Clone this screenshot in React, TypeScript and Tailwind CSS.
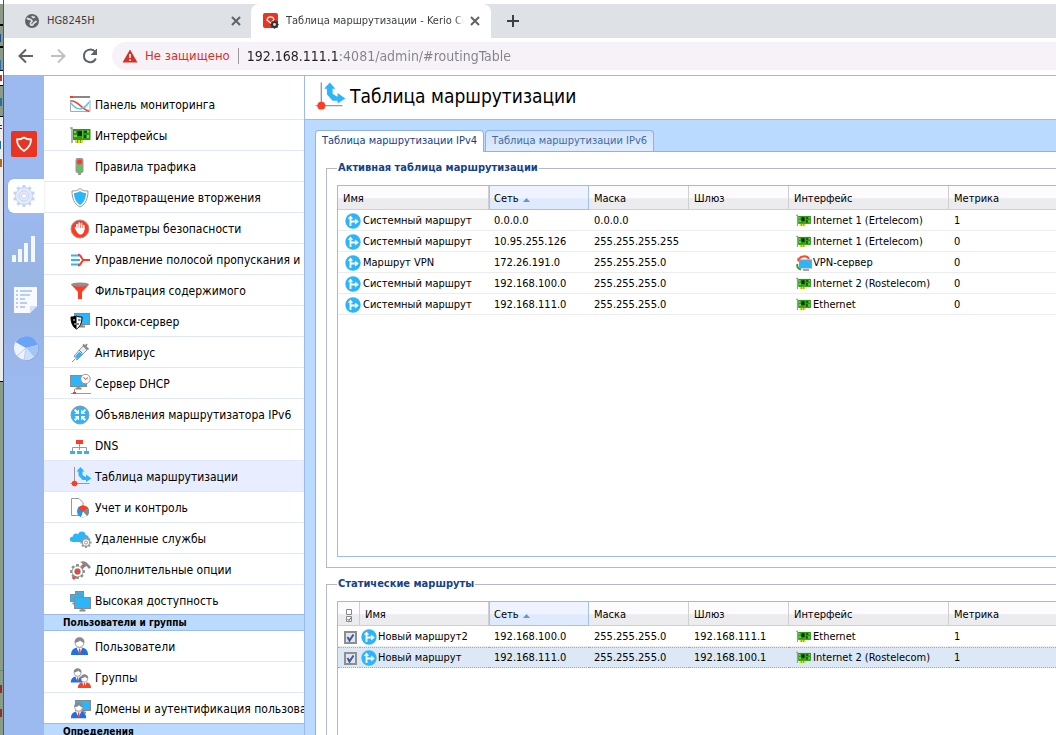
import type { ReactNode } from "react";

function Svg({ children, className = "size-[22px]", box = "0 0 22 22" }: { children: ReactNode; className?: string; box?: string }) {
  return (
    <svg viewBox={box} className={`${className} shrink-0`} fill="none" aria-hidden="true">
      {children}
    </svg>
  );
}

function GearShape({ color, hole }: { color: string; hole: string }) {
  return (
    <g>
      {[0, 45, 90, 135].map((a) => (
        <rect key={a} x="-2" y="-10" width="4" height="20" rx="1" fill={color} transform={`rotate(${a})`} />
      ))}
      <circle r="7.5" fill={color} />
      <circle r="3.5" fill={hole} />
    </g>
  );
}

function Monitor({ x = 0, y = 0, w = 16, h = 11 }) {
  return (
    <g>
      <rect x={x + 0.5} y={y + 0.5} width={w - 1} height={h - 1} fill="#2bb5fa" stroke="#8a8a8a" />
      <path d={`M${x + w / 2 - 3} ${y + h + 1.5}h6M${x + w / 2} ${y + h}v1.5`} stroke="#8a8a8a" strokeWidth="2" />
    </g>
  );
}

function NetCard({ className = "size-[22px]" }: { className?: string }) {
  return (
    <Svg className={className}>
      <path d="M0 3h2v15" stroke="#999" strokeWidth="1.5" />
      <rect x="3" y="4" width="17.5" height="11" fill="#2a9a12" />
      <path d="M4 6h2v2H4zM4 10h3v2H4zM17 5.5h2v2h-2zM17 10h2v3h-2z" fill="#7bd84a" />
      <rect x="7.5" y="6" width="5" height="5" fill="#0b2a06" />
      <path d="M14 6h3v2h-3zM14 10h2v3h-2z" fill="#124d08" />
      <path d="M12.5 5v9" stroke="#5cc030" />
      <path d="M5 15h8v3H5z" fill="#d9dc3a" />
      <path d="M7.5 15v3M10.5 15v3" stroke="#7a9a20" />
    </Svg>
  );
}

function RoutingIcon({ className = "size-[22px]" }: { className?: string }) {
  return (
    <Svg className={className}>
      <path d="M4.5 1v17M0.500 17.500h19" stroke="#999" />
      <path d="M6.500 5.500L10.500 1L14.500 5.500H12.500V9L15.500 11H16V8.500L21.500 12.500L16 16V14H12.500L8.500 9.500V5.500Z" fill="#2bb5fa" />
      <circle cx="4.500" cy="17.500" r="2.800" fill="#ff3b22" />
    </Svg>
  );
}

function RouteBadge() {
  return (
    <Svg className="size-4" box="0 0 16 16">
      <circle cx="8" cy="8" r="7.700" fill="#2bb5fa" />
      <path d="M5.500 13V5M5.500 8.500H11" stroke="#fff" strokeWidth="1.800" />
      <path d="M2.800 5.700L5.500 2.500L8.200 5.700ZM10.200 5.500L13.800 8.500L10.200 11.500Z" fill="#fff" />
    </Svg>
  );
}

function VpnIcon() {
  return (
    <Svg className="size-4" box="0 0 16 16">
      <path d="M2.500 6C3 0.500 11 0 13 4" stroke="#ff4a2a" strokeWidth="2" />
      <path d="M1 3l1 4 3-2z" fill="#ff4a2a" />
      <path d="M1.500 9C0.500 12 2.500 14 5 14.500" stroke="#2f9e4a" strokeWidth="2" />
      <rect x="3.500" y="5" width="12" height="8" fill="#2bb5fa" stroke="#999" />
      <path d="M7 15h6" stroke="#888" strokeWidth="1.500" />
    </Svg>
  );
}

function Person({ x = 0, y = 0, s = 1, shirt = "#1f6fe8" }) {
  return (
    <g transform={`translate(${x} ${y}) scale(${s})`}>
      <path d="M1 18C1 13 4 11 7 10.500H12C15 11 18 13 18 18Z" fill={shirt} />
      <path d="M6.500 10.500L9.500 17L12.500 10.500Z" fill="#fff" />
      <path d="M9 11.500h1.200l0.600 5-1.200 1.500-1.200-1.500z" fill="#f0452c" />
      <circle cx="9.500" cy="6" r="4.300" fill="#fff" stroke="#999" />
      <path d="M4.500 5.500C4.500 -1.500 14.500 -1.500 14.500 5.500C12 5.500 11 4.500 10 3.500C9 5 7 5.500 4.500 5.500Z" fill="#8a8a8a" />
    </g>
  );
}

const menu: { title: string; icon: ReactNode; active?: boolean }[] = [
  {
    title: "Панель мониторинга",
    icon: (
      <Svg>
        <path d="M0 3h20" stroke="#888" strokeWidth="2" />
        <path d="M0 3h3" stroke="#ff3b22" strokeWidth="2" />
        <path d="M0.500 6v11.500H20V6" stroke="#aaa" />
        <path d="M1 7C8 6 12 16 19 17" stroke="#f0452c" strokeWidth="1.500" />
        <path d="M1 9C6 16 13 18 19 8" stroke="#5cc5f8" strokeWidth="1.500" />
      </Svg>
    ),
  },
  { title: "Интерфейсы", icon: <NetCard /> },
  {
    title: "Правила трафика",
    icon: (
      <Svg>
        <rect x="5.500" y="2" width="8" height="15" rx="2" fill="#999" />
        <path d="M8 17h3v2H8z" fill="#999" />
        <circle cx="9.500" cy="6" r="2.500" fill="#ff3b22" />
        <circle cx="9.500" cy="12.500" r="2.500" fill="#35e030" />
      </Svg>
    ),
  },
  {
    title: "Предотвращение вторжения",
    icon: (
      <Svg>
        <path d="M10 1.500C12 3.500 15 4 18 4C18 11 16 17 10 20C4 17 2 11 2 4C5 4 8 3.500 10 1.500Z" fill="#fff" stroke="#999" />
        <path d="M10 4C12 5.500 14 6 16 6C16 11 14 15.500 10 18C6 15.500 4 11 4 6C6 6 8 5.500 10 4Z" fill="#2bb5fa" />
      </Svg>
    ),
  },
  {
    title: "Параметры безопасности",
    icon: (
      <Svg>
        <circle cx="10" cy="11" r="9" fill="#ff3b22" stroke="#999" />
        <path d="M7 11V6.500M9.200 10V5M11.500 10V5.500M13.700 11V7.500M5.500 10L8 14" stroke="#fff" strokeWidth="1.700" strokeLinecap="round" />
        <path d="M6.500 10H14.500C14.500 14 13 16.500 10.500 16.500C8 16.500 6.500 14 6.500 10Z" fill="#fff" />
      </Svg>
    ),
  },
  {
    title: "Управление полосой пропускания и",
    icon: (
      <Svg>
        <path d="M1 6.500h9M1 11h9M1 15.500h9" stroke="#2bb5fa" strokeWidth="2" />
        <path d="M8 5.500C12 5.500 11 11 14 11H20M8 16.500C12 16.500 11 11 14 11" stroke="#ff3b22" strokeWidth="2" />
      </Svg>
    ),
  },
  {
    title: "Фильтрация содержимого",
    icon: (
      <Svg>
        <path d="M1 4.500H19L12 12V19H8V12Z" fill="#ff3b22" />
        <ellipse cx="10" cy="4.500" rx="9" ry="2" fill="#8f8f8f" />
      </Svg>
    ),
  },
  {
    title: "Прокси-сервер",
    icon: (
      <Svg>
        <Monitor x={4} y={2} w={16} h={12} />
        <path d="M1 6C3 6 5 6 6.500 5C8 6 10 6 12 6C12 12 10 16 6.500 18C3 16 1 12 1 6Z" fill="#fff" stroke="#000" />
        <path d="M6.500 5V18C3 16 1 12 1 6Z" fill="#000" />
        <path d="M3 9h2M6.500 13H4" stroke="#fff" />
        <path d="M8 9h2.500M6.500 13H9" stroke="#000" />
      </Svg>
    ),
  },
  {
    title: "Антивирус",
    icon: (
      <Svg>
        <path d="M2 20L5 17" stroke="#999" />
        <path d="M4 14L13 4L17 8L7 18Z" fill="#e8eef2" stroke="#999" />
        <path d="M5 14.500L9 10L13 12L7.500 17Z" fill="#2bb5fa" />
        <path d="M9 8l3 3" stroke="#f0452c" />
        <path d="M13 2.500l5.500 5M15 5l2-3" stroke="#888" strokeWidth="1.800" />
      </Svg>
    ),
  },
  {
    title: "Сервер DHCP",
    icon: (
      <Svg>
        <Monitor x={0} y={2} w={17} h={12} />
        <path d="M1 20.500h20M4.500 16v4" stroke="#999" />
        <rect x="3" y="19" width="3" height="2" fill="#ff3b22" />
        <circle cx="15.500" cy="6" r="4.700" fill="#fff" stroke="#999" />
        <path d="M13.500 4L15.500 6.500L18 4.500" stroke="#f0452c" />
      </Svg>
    ),
  },
  {
    title: "Объявления маршрутизатора IPv6",
    icon: (
      <Svg>
        <circle cx="10" cy="11" r="9" fill="#2bb5fa" stroke="#8a9aa5" />
        {[0, 90, 180, 270].map((a) => (
          <path key={a} transform={`rotate(${a} 10 11)`} fill="#fff" d="M9 10V5.500L7.500 7L5.500 5L4 6.500L6 8.500L4.500 10Z" />
        ))}
      </Svg>
    ),
  },
  {
    title: "DNS",
    icon: (
      <Svg>
        <path d="M9.500 8v7M2.500 16v-3.500h14V16" stroke="#999" />
        <rect x="6" y="5" width="7" height="4" fill="#ff3b22" />
        <path d="M0 16h5v3H0zM7 16h5v3H7zM14 16h5v3h-5z" fill="#2bb5fa" />
      </Svg>
    ),
  },
  { title: "Таблица маршрутизации", icon: <RoutingIcon />, active: true },
  {
    title: "Учет и контроль",
    icon: (
      <Svg>
        <path d="M9 18.500H1.500V1.500H9L13 5.500V9" fill="#fff" stroke="#999" />
        <circle cx="13" cy="14.500" r="6" fill="#2196e8" />
        <path d="M13 14.500L8 11C10 7.500 16 7.500 18 11Z" fill="#ff3b22" />
        <path d="M13 14.500L18 11C20 14 19 17 17 19Z" fill="#888" />
        <path d="M13 14.500L17 19C14 21 12 20.500 11 20Z" fill="#fff" />
      </Svg>
    ),
  },
  {
    title: "Удаленные службы",
    icon: (
      <Svg>
        <path d="M3 14C-1.500 14 -1 8.500 3 8.500C3 5 7 5 8 6.500C9 2 16 3 15.500 7C20 7 20 14 16 14Z" fill="#2bb5fa" />
        <g transform="translate(16 14.500) scale(0.56)">
          <GearShape color="#999" hole="#fff" />
          <circle r="5.500" fill="#fff" />
          <circle r="2.800" stroke="#888" strokeWidth="1.500" />
        </g>
      </Svg>
    ),
  },
  {
    title: "Дополнительные опции",
    icon: (
      <Svg>
        <path d="M3 20L14 6" stroke="#f0452c" strokeWidth="3" />
        <g transform="translate(7.500 12.500) scale(0.75)">
          <GearShape color="#8f8f8f" hole="#f0452c" />
          <circle r="5.500" stroke="#fff" strokeWidth="2.500" />
        </g>
        <path d="M10 3C13 1.500 16 2 18 5L21 8L19 10L16.500 7L14 8.500C14 5.500 12 4 10 3Z" fill="#888" />
      </Svg>
    ),
  },
  {
    title: "Высокая доступность",
    icon: (
      <Svg>
        <Monitor x={5} y={1} w={9} h={7} />
        <Monitor x={-0.500} y={4} w={12} h={8} />
        <Monitor x={4} y={7} w={17} h={12} />
      </Svg>
    ),
  },
];

const users: { title: string; icon: ReactNode }[] = [
  { title: "Пользователи", icon: <Svg><Person y={1} /></Svg> },
  {
    title: "Группы",
    icon: (
      <Svg>
        <Person y={1} s={0.8} />
        <Person x={7} y={7} s={0.78} shirt="#f0452c" />
      </Svg>
    ),
  },
  {
    title: "Домены и аутентификация пользователей",
    icon: (
      <Svg>
        <Monitor x={5} y={2} w={16} h={11} />
        <Person y={4} s={0.9} />
      </Svg>
    ),
  },
];

interface Route {
  name: string;
  net: string;
  mask: string;
  gateway?: string;
  iface: string;
  metric: number;
}

const activeRoutes: Route[] = [
  { name: "Системный маршрут", net: "0.0.0.0", mask: "0.0.0.0", iface: "Internet 1 (Ertelecom)", metric: 1 },
  { name: "Системный маршрут", net: "10.95.255.126", mask: "255.255.255.255", iface: "Internet 1 (Ertelecom)", metric: 0 },
  { name: "Маршрут VPN", net: "172.26.191.0", mask: "255.255.255.0", iface: "VPN-сервер", metric: 0 },
  { name: "Системный маршрут", net: "192.168.100.0", mask: "255.255.255.0", iface: "Internet 2 (Rostelecom)", metric: 0 },
  { name: "Системный маршрут", net: "192.168.111.0", mask: "255.255.255.0", iface: "Ethernet", metric: 0 },
];

const staticRoutes: Route[] = [
  { name: "Новый маршрут2", net: "192.168.100.0", mask: "255.255.255.0", gateway: "192.168.111.1", iface: "Ethernet", metric: 1 },
  { name: "Новый маршрут", net: "192.168.111.0", mask: "255.255.255.0", gateway: "192.168.100.1", iface: "Internet 2 (Rostelecom)", metric: 1 },
];

function RouteTable({ routes, checkable = false, selected = -1 }: { routes: Route[]; checkable?: boolean; selected?: number }) {
  const th = "h-6 border-r border-b border-[#d0d0d0] bg-linear-to-b from-[#fdfbfd] from-50% to-[#ececef] to-55% p-0 pt-1 pl-[5px] text-left font-normal last:border-r-0";
  return (
    <table className="w-full table-fixed border-separate border-spacing-0 whitespace-nowrap">
      <colgroup>
        {checkable && <col className="w-[22px]" />}
        <col className={checkable ? "w-[129px]" : "w-[151px]"} />
        <col className="w-[100px]" />
        <col className="w-[100px]" />
        <col className="w-[100px]" />
        <col className="w-[160px]" />
        <col />
      </colgroup>
      <thead>
        <tr>
          {checkable && (
            <th className={th}>
              <Svg className="h-3.5 w-3" box="0 0 12 14">
                <path d="M3.500 0.500h5v5h-5zM3.500 7.500h5v5h-5z" fill="#fff" stroke="#888" />
                <path d="M4.500 10L6 11.500L8 8.500" stroke="#3a5a9a" />
              </Svg>
            </th>
          )}
          <th className={checkable ? `${th} pl-[3px]` : th}>Имя</th>
          <th className="h-6 border border-t-0 border-[#a3c2f3] bg-linear-to-b from-[#eff3ff] from-50% to-[#dfebfc] to-55% p-0 pt-1 pl-1 text-left font-normal">
            <span className="flex items-center gap-1">
              Сеть
              <Svg className="h-1 w-[7px]" box="0 0 7 4">
                <path d="M0 4L3.500 0L7 4Z" fill="#6d94cf" />
              </Svg>
            </span>
          </th>
          <th className={th}>Маска</th>
          <th className={th}>Шлюз</th>
          <th className={th}>Интерфейс</th>
          <th className={th}>Метрика</th>
        </tr>
      </thead>
      <tbody>
        {routes.map((r, i) => {
          const td =
            i === selected
              ? "h-[21px] border-y border-dotted border-[#8fb0de] bg-[#dce8f6] p-0 pt-px pl-[5px]"
              : "h-[21px] border-b border-[#ededed] p-0 pt-0.5 pl-[5px]";
          return (
            <tr key={i}>
              {checkable && (
                <td className={td}>
                  <label className="flex items-center pl-px">
                    <input
                      type="checkbox"
                      defaultChecked
                      aria-label={r.name}
                      className="peer size-[13px] appearance-none border-2 border-[#8d8f8d] bg-[#e2e4ee]"
                    />
                    <Svg className="pointer-events-none -ml-[13px] hidden size-[13px] peer-checked:block" box="0 0 13 13">
                      <path d="M3.500 6L5.500 9.500L9.500 3.500" stroke="#3d5aa0" strokeWidth="2" />
                    </Svg>
                  </label>
                </td>
              )}
              <td className={td}>
                <span className={checkable ? "-ml-1 flex items-center gap-px" : "flex items-center gap-0.5 pl-0.5"}>
                  <RouteBadge />
                  {r.name}
                </span>
              </td>
              <td className={td}>{r.net}</td>
              <td className={td}>{r.mask}</td>
              <td className={td}>{r.gateway}</td>
              <td className={td}>
                <span className="flex items-center gap-px pl-0.5">
                  {r.iface === "VPN-сервер" ? <VpnIcon /> : <NetCard className="size-4" />}
                  {r.iface}
                </span>
              </td>
              <td className={td}>{r.metric}</td>
            </tr>
          );
        })}
      </tbody>
    </table>
  );
}

function GroupHeader({ children }: { children: ReactNode }) {
  return (
    <h2 className="h-[17px] shrink-0 border-y border-[#9cb9f0] bg-[#bbdaff] pl-[19px] text-[10px] leading-[15px] font-bold">{children}</h2>
  );
}

function MenuLink({ title, icon, active, height = "h-[31px] border-b" }: { title: string; icon: ReactNode; active?: boolean; height?: string }) {
  return (
    <a
      href="#"
      className={`flex shrink-0 items-center gap-[3px] border-[#dfe8f6] pt-0.5 pl-[26px] text-xs whitespace-nowrap ${height} ${active ? "bg-[#e8edff]" : ""}`}
    >
      {icon}
      {title}
    </a>
  );
}

function CloseIcon() {
  return (
    <Svg className="size-3" box="0 0 12 12">
      <path d="M2 2L10 10M10 2L2 10" stroke="#5f6368" strokeWidth="2" />
    </Svg>
  );
}

function BrowserChrome() {
  return (
    <header className="shrink-0 border-b border-[#b4b4b4] bg-white pt-1 text-[#5f6368]">
      <div className="flex h-[34px] bg-[#dee1e6] text-[11px]">
        <div className="flex w-[247px] items-center pr-[7px] pl-5">
          <Svg className="size-4" box="0 0 16 16">
            <circle cx="8" cy="8" r="7" fill="#5f6368" />
            <path d="M3 5C5 7 8 6 8 8C8 9 6 9 6.500 11C7 13 9 12 9.500 10.500C10 9.500 12 9 12.500 8M8 3C8.500 4.500 10 4.500 11 4" stroke="#dee1e6" strokeWidth="1.800" />
          </Svg>
          <span className="ml-[7px] grow text-[#3c4043]">HG8245H</span>
          <button aria-label="Закрыть" className="p-0.5"><CloseIcon /></button>
        </div>
        <div className="flex w-60 items-center rounded-t-lg bg-white pr-2 pl-3">
          <Svg className="size-4" box="0 0 16 16">
            <rect width="15" height="15" rx="2" fill="#e83420" />
            <path d="M7.500 10L4 7L5 4.500C7 3.500 8 3.500 10 4.500L11 7Z" stroke="#fff" strokeWidth="1.300" />
            <g transform="translate(11.500 11.500) scale(0.42)">
              <GearShape color="#333" hole="#ddd" />
            </g>
          </Svg>
          <span className="ml-[7px] w-[178px] overflow-hidden mask-r-from-95% whitespace-nowrap text-[#3c4043]">
            Таблица маршрутизации - Kerio Control
          </span>
          <button aria-label="Закрыть" className="ml-auto p-0.5"><CloseIcon /></button>
        </div>
        <button aria-label="Новая вкладка" className="ml-3.5 flex items-center">
          <Svg className="size-4" box="0 0 16 16">
            <path d="M8 2v12M2 8h12" stroke="#3c4043" strokeWidth="2" />
          </Svg>
        </button>
      </div>
      <div className="flex h-[37px] items-center pb-0.5 pl-3">
        <button aria-label="Назад">
          <Svg className="size-5" box="0 0 20 20">
            <path d="M17 10H4M10 3.500L3.500 10L10 16.500" stroke="#5f6368" strokeWidth="2" />
          </Svg>
        </button>
        <button aria-label="Вперёд" className="ml-3">
          <Svg className="size-5" box="0 0 20 20">
            <path d="M3 10H16M10 3.500L16.500 10L10 16.500" stroke="#bfc1c3" strokeWidth="2" />
          </Svg>
        </button>
        <button aria-label="Обновить" className="ml-3">
          <Svg className="size-5" box="0 0 20 20">
            <path d="M15.500 6C12 1.500 4 3.500 4 10C4 16.500 13 18.500 15.800 12.500" stroke="#5f6368" strokeWidth="2" />
            <path d="M17 2.500V9H10.500Z" fill="#5f6368" />
          </Svg>
        </button>
        <div className="ml-3 flex h-7 grow items-center rounded-l-full bg-[#f7f2f7] pl-2.5">
          <Svg className="size-4" box="0 0 16 16">
            <path d="M8 1.500L15.500 14.500H0.500Z" fill="#d93025" />
            <path d="M8 6v4M8 11.300v1.700" stroke="#fff" strokeWidth="1.600" />
          </Svg>
          <label htmlFor="address" className="ml-[7px] text-[13px] whitespace-nowrap text-[#d93025]">Не защищено</label>
          <span className="mx-2 h-4 w-px shrink-0 bg-[#9a9a9e]" />
          {/* host part is darker than the rest of the address */}
          <input
            id="address"
            className="min-w-0 grow bg-linear-to-r from-[#202124] from-[92px] to-[#80838a] to-[92px] bg-clip-text text-sm text-transparent outline-none"
            defaultValue="192.168.111.1:4081/admin/#routingTable"
          />
        </div>
      </div>
    </header>
  );
}

function Rail() {
  return (
    <nav className="flex w-10 shrink-0 flex-col items-end bg-[#9cb9f0] pt-[55px]">
      <a href="#" aria-label="Kerio Control" className="mr-[7px] flex size-[26px] items-center justify-center rounded-xs bg-[#e83420]">
        <Svg className="size-[18px]" box="0 0 18 18">
          <path d="M9 2.500C11 4 13 4.500 16 4.500C16 9.500 13 13.500 9 16C5 13.500 2 9.500 2 4.500C5 4.500 7 4 9 2.500Z" stroke="#fff" strokeWidth="1.800" />
        </Svg>
      </a>
      <a href="#" aria-label="Конфигурация" className="mt-[22px] flex h-[34px] w-9 items-center rounded-l-md bg-white pl-1 shadow-sm">
        <Svg className="size-6" box="-12 -12 24 24">
          {[0, 36, 72, 108, 144].map((a) => (
            <rect key={a} x="-1.500" y="-11" width="3" height="22" fill="#c3d3f3" transform={`rotate(${a})`} />
          ))}
          <circle r="8.500" fill="#e4ecfc" stroke="#c3d3f3" />
          <circle r="5" stroke="#c3d3f3" />
          <circle r="2.500" fill="#fff" stroke="#c3d3f3" />
        </Svg>
      </a>
      <a href="#" aria-label="Состояние" className="flex h-[72px] w-full items-center bg-linear-to-b from-[#9cb9f0] to-[#98b4e2] pl-2">
        <Svg className="h-7 w-6" box="0 0 24 28">
          <path d="M0 20h4v7H0zM6 14h4v13H6zM12 8h4v19h-4zM19 1h4v26h-4z" fill="#f4f8ff" />
        </Svg>
      </a>
      <a href="#" aria-label="Журналы" className="flex h-[30px] w-full items-center bg-[#98b4e4] pl-[9px]">
        <Svg className="h-7 w-6" box="0 0 24 28">
          <path d="M1 1H24V20L17 27H1Z" fill="#f8faff" />
          <path d="M24 20H17V27Z" fill="#d5e0f6" />
          <path d="M3 5h2M7 5h12M3 9h2M7 9h10M3 13h2M7 13h5M3 17h2M7 17h7M3 21h2M7 21h5" stroke="#b9cdf4" strokeWidth="2" />
        </Svg>
      </a>
      <a href="#" aria-label="Отчёты" className="flex h-[66px] w-full items-center bg-linear-to-b from-[#98b4e4] to-[#9cb9f0] pl-[9px]">
        <Svg className="size-[26px]" box="0 0 26 26">
          <circle cx="13.500" cy="13.500" r="12" fill="#7394cc" />
          <circle cx="13" cy="13" r="12" fill="#eef3ff" />
          <path d="M13 13L2.500 7C8 -2 22 -1 24.500 10Z" fill="#6aa3f8" />
          <path d="M13 13L24.500 10C26 15 24 19 21 22Z" fill="#a3c6fa" />
          <path d="M13 13L21 22C17 25.500 14 25.500 11 25Z" fill="#ccdffc" />
          <path d="M13 13L11 25M13 13L4 21" stroke="#b9cdf4" />
        </Svg>
      </a>
    </nav>
  );
}

// edge of the window that peeks out from behind the browser
function BackWindow() {
  return (
    <div className="flex w-1 shrink-0 flex-col overflow-hidden border-r border-[#55584f] bg-[#8a9b88]">
      <div className="h-1 shrink-0 bg-white" />
      <div className="mt-5 h-0.5 shrink-0 bg-black" />
      <div className="mt-2 h-2 w-px shrink-0 bg-[#1f4f8f]" />
      <div className="mt-1 h-0.5 shrink-0 bg-black" />
      <div className="mt-3 h-2.5 w-px shrink-0 bg-[#2c6fb0]" />
      <div className="h-4 shrink-0 border-y border-black bg-white pt-1">
        <div className="h-1.5 w-0.5 bg-[#c0392b]" />
      </div>
      <div className="mt-3 h-2 w-0.5 shrink-0 bg-[#2f6d9f]" />
      <div className="mt-2.5 h-[266px] shrink-0 border-y border-black bg-[#ececec] pt-2">
        <div className="h-1 w-0.5 border-y border-[#333]" />
        <div className="mt-3 h-2 w-px bg-[#2f6d9f]" />
        <div className="mt-2.5 h-2 w-0.5 bg-[#b06a20]" />
      </div>
      <div className="mt-72 h-px shrink-0 bg-[#5a9060]" />
      <div className="mt-3.5 h-2 w-0.5 shrink-0 bg-[#8c2f2f]" />
      <div className="mt-4 h-2 w-0.5 shrink-0 bg-[#8c2f2f]" />
    </div>
  );
}

export default function App() {
  return (
    <div className="flex h-screen overflow-hidden bg-white font-['DejaVu_Sans_Condensed','DejaVu_Sans',sans-serif] text-[11px] text-black">
      <BackWindow />
      <div className="flex min-w-0 grow flex-col">
        <BrowserChrome />
        <div className="flex min-h-0 grow">
          <Rail />
          <aside className="flex w-[260px] shrink-0 flex-col overflow-hidden pt-[13px]">
            {menu.map((m, i) => (
              <MenuLink key={m.title} {...m} height={i === menu.length - 1 ? "h-[29px]" : undefined} />
            ))}
            <GroupHeader>Пользователи и группы</GroupHeader>
            {users.map((m, i) => (
              <MenuLink key={m.title} {...m} height={i === users.length - 1 ? "h-[30px]" : undefined} />
            ))}
            <GroupHeader>Определения</GroupHeader>
          </aside>
          <main className="flex min-w-0 grow flex-col overflow-hidden border-l border-[#9cb9f0] bg-[#bbdaff]">
            <div className="flex h-11 shrink-0 items-center gap-1 border-b border-[#9cb9f0] bg-white pb-0.5 pl-2.5">
              <RoutingIcon className="size-[31px]" />
              <h1 className="text-[19px] whitespace-nowrap">Таблица маршрутизации</h1>
            </div>
            <div className="flex shrink-0 gap-px pt-2.5 pl-2.5">
              <button className="z-10 -mb-px h-[22px] w-[169px] rounded-t-sm border border-b-0 border-[#8db2e3] bg-white whitespace-nowrap text-[#15428b]">
                Таблица маршрутизации IPv4
              </button>
              <button className="h-[21px] w-[169px] rounded-t-sm border border-b-0 border-[#8db2e3] bg-linear-to-b from-[#d0e0fa] to-[#deecfd] whitespace-nowrap text-[#416da3]">
                Таблица маршрутизации IPv6
              </button>
            </div>
            <div className="ml-2.5 grow border-t border-l border-[#8db2e3] bg-white pt-2 pl-2.5">
              <fieldset className="-mr-px min-w-0 border border-[#b5b8c8] pt-[9px] pb-2.5 pl-2.5">
                <legend className="px-px text-[11px] leading-4 font-bold text-[#15428b]">Активная таблица маршрутизации</legend>
                <div className="-mr-px h-[372px] overflow-hidden border border-[#9cb9f0]">
                  <RouteTable routes={activeRoutes} />
                </div>
              </fieldset>
              <fieldset className="mt-2 -mr-px min-w-0 border border-[#b5b8c8] pt-[9px] pb-2.5 pl-2.5">
                <legend className="px-px text-[11px] leading-4 font-bold text-[#15428b]">Статические маршруты</legend>
                <div className="-mr-px h-[372px] overflow-hidden border border-[#9cb9f0]">
                  <RouteTable routes={staticRoutes} checkable selected={1} />
                </div>
              </fieldset>
            </div>
          </main>
        </div>
      </div>
    </div>
  );
}
